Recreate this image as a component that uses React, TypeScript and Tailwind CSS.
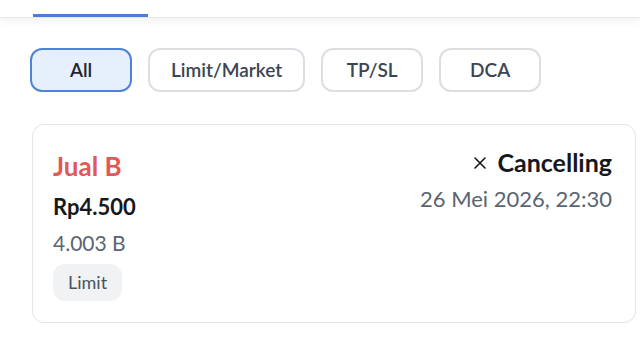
import React from 'react';

const tabs = ['All', 'Limit/Market', 'TP/SL', 'DCA'];

const App = () => {
  return (
    <div className="w-[640px] h-[341px] bg-white overflow-hidden" style={{ fontFamily: 'Lato, "Noto Sans", sans-serif' }}>
      <div className="relative h-[18px] bg-white border-b border-[#e4e6e8] shadow-[0_3px_8px_rgba(0,0,0,0.06)]">
        <div className="absolute left-[33px] bottom-0 w-[115px] h-[3px] bg-[#4a7fd8]" />
      </div>

      <div className="flex gap-4 pl-[30px] pt-[30px]">
        {tabs.map((t, i) => (
          <button
            key={t}
            className={
              i === 0
                ? 'h-[44px] min-w-[102px] px-[21px] rounded-xl border-2 border-[#4f83d6] bg-[#e5f0fc] text-[19px] font-semibold text-[#1f2630]'
                : 'h-[44px] min-w-[102px] px-[21px] rounded-xl border-2 border-[#dcdfe2] bg-white text-[19px] font-semibold text-[#3b4553]'
            }
          >
            {t}
          </button>
        ))}
      </div>

      <div className="ml-[32px] mr-[4px] mt-[32px] h-[199px] rounded-xl border border-[#e2e4e7] px-[20px] pt-[26px] flex justify-between">
        <div className="flex flex-col items-start">
          <div className="text-[26px] leading-[31px] font-bold text-[#e05858]">Jual B</div>
          <div className="mt-[12px] text-[22px] leading-[26px] font-bold text-[#15181c]">Rp4.500</div>
          <div className="mt-[10px] text-[21px] leading-[26px] text-[#5a6472]">4.003 B</div>
          <div className="mt-[8px] h-[37px] px-[15px] rounded-xl bg-[#f0f2f4] text-[18px] text-[#4a5461] flex items-center">Limit</div>
        </div>
        <div className="-mt-[4px] flex flex-col items-end pr-[3px]">
          <div className="flex items-center gap-[10px] text-[25px] leading-[30px] font-bold text-[#15181c]">
            <svg width="14" height="14" viewBox="0 0 14 14" className="mt-[1px]">
              <path d="M2 2 L12 12 M12 2 L2 12" stroke="#15181c" strokeWidth="1.6" strokeLinecap="round" />
            </svg>
            <span>Cancelling</span>
          </div>
          <div className="mt-[9px] text-[22px] leading-[26px] text-[#5a6472]">26 Mei 2026, 22:30</div>
        </div>
      </div>
    </div>
  );
};

export default App;
